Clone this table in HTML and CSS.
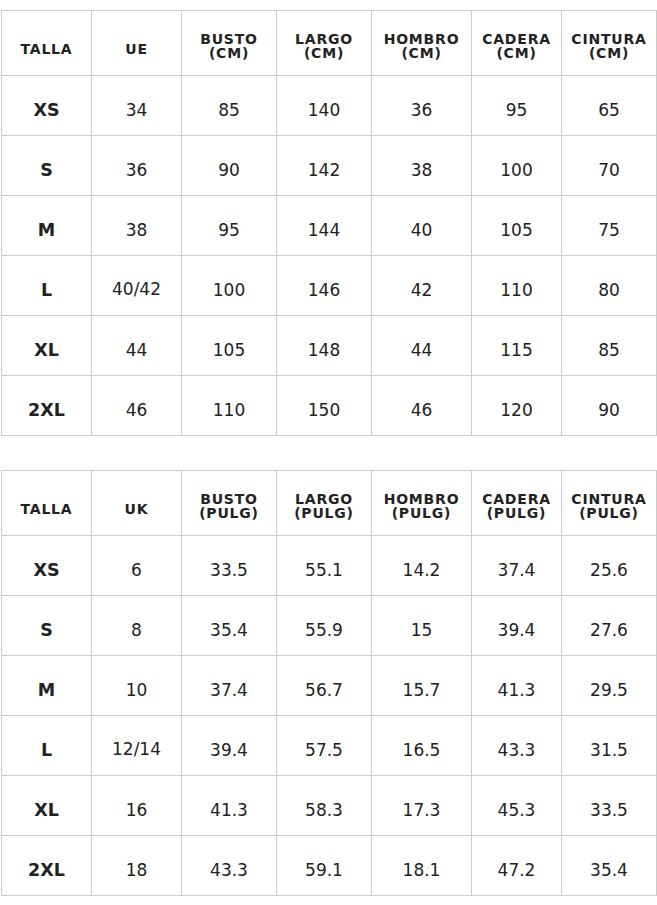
FILE: index.html
```html
<!DOCTYPE html>
<html lang="es">
<head>
<meta charset="utf-8">
<title>Tabla de tallas</title>
<link rel="stylesheet" href="styles.css">
</head>
<body>
<div class="page">
  <table class="sizes">
    <colgroup>
      <col class="c1"><col class="c2"><col class="c3"><col class="c4"><col class="c5"><col class="c6"><col class="c7">
    </colgroup>
    <thead>
      <tr><th class="one">TALLA</th><th class="one">UE</th><th>BUSTO<br>(CM)</th><th>LARGO<br>(CM)</th><th>HOMBRO<br>(CM)</th><th>CADERA<br>(CM)</th><th>CINTURA<br>(CM)</th></tr>
    </thead>
    <tbody>
      <tr><td class="size">XS</td><td>34</td><td>85</td><td>140</td><td>36</td><td>95</td><td>65</td></tr>
      <tr><td class="size">S</td><td>36</td><td>90</td><td>142</td><td>38</td><td>100</td><td>70</td></tr>
      <tr><td class="size">M</td><td>38</td><td>95</td><td>144</td><td>40</td><td>105</td><td>75</td></tr>
      <tr><td class="size">L</td><td class="up">40/42</td><td>100</td><td>146</td><td>42</td><td>110</td><td>80</td></tr>
      <tr><td class="size">XL</td><td>44</td><td>105</td><td>148</td><td>44</td><td>115</td><td>85</td></tr>
      <tr><td class="size">2XL</td><td>46</td><td>110</td><td>150</td><td>46</td><td>120</td><td>90</td></tr>
    </tbody>
  </table>

  <table class="sizes">
    <colgroup>
      <col class="c1"><col class="c2"><col class="c3"><col class="c4"><col class="c5"><col class="c6"><col class="c7">
    </colgroup>
    <thead>
      <tr><th class="one">TALLA</th><th class="one">UK</th><th>BUSTO<br>(PULG)</th><th>LARGO<br>(PULG)</th><th>HOMBRO<br>(PULG)</th><th>CADERA<br>(PULG)</th><th>CINTURA<br>(PULG)</th></tr>
    </thead>
    <tbody>
      <tr><td class="size">XS</td><td>6</td><td>33.5</td><td>55.1</td><td>14.2</td><td>37.4</td><td>25.6</td></tr>
      <tr><td class="size">S</td><td>8</td><td>35.4</td><td>55.9</td><td>15</td><td>39.4</td><td>27.6</td></tr>
      <tr><td class="size">M</td><td>10</td><td>37.4</td><td>56.7</td><td>15.7</td><td>41.3</td><td>29.5</td></tr>
      <tr><td class="size">L</td><td class="up">12/14</td><td>39.4</td><td>57.5</td><td>16.5</td><td>43.3</td><td>31.5</td></tr>
      <tr><td class="size">XL</td><td>16</td><td>41.3</td><td>58.3</td><td>17.3</td><td>45.3</td><td>33.5</td></tr>
      <tr><td class="size">2XL</td><td>18</td><td>43.3</td><td>59.1</td><td>18.1</td><td>47.2</td><td>35.4</td></tr>
    </tbody>
  </table>
</div>
</body>
</html>
```

FILE: styles.css
```css
html, body {
  margin: 0;
  padding: 0;
  background: #ffffff;
}

.page {
  padding: 10px 0 0 1px;
  display: flex;
  flex-direction: column;
  gap: 34px;
  font-family: "DejaVu Sans", sans-serif;
  color: #222222;
}

.sizes {
  border-collapse: collapse;
  table-layout: fixed;
  width: 656px;
}

.c1 { width: 90px; }
.c2 { width: 90px; }
.c3 { width: 95px; }
.c4 { width: 95px; }
.c5 { width: 100px; }
.c6 { width: 90px; }
.c7 { width: 95px; }

.sizes th,
.sizes td {
  border: 1px solid #cccccc;
  text-align: center;
  vertical-align: middle;
  padding: 0;
}

.sizes th {
  height: 65px;
  padding-top: 5px;
  box-sizing: border-box;
  font-size: 14px;
  line-height: 14px;
  font-weight: bold;
  letter-spacing: 0.8px;
}

.sizes th.one {
  padding-top: 11px;
}

.sizes td {
  height: 60px;
  padding-top: 8px;
  box-sizing: border-box;
  font-size: 17px;
  line-height: 20px;
}

.sizes td.size {
  font-weight: bold;
  font-size: 17.5px;
}

.sizes td.up {
  padding-top: 6px;
}
```
